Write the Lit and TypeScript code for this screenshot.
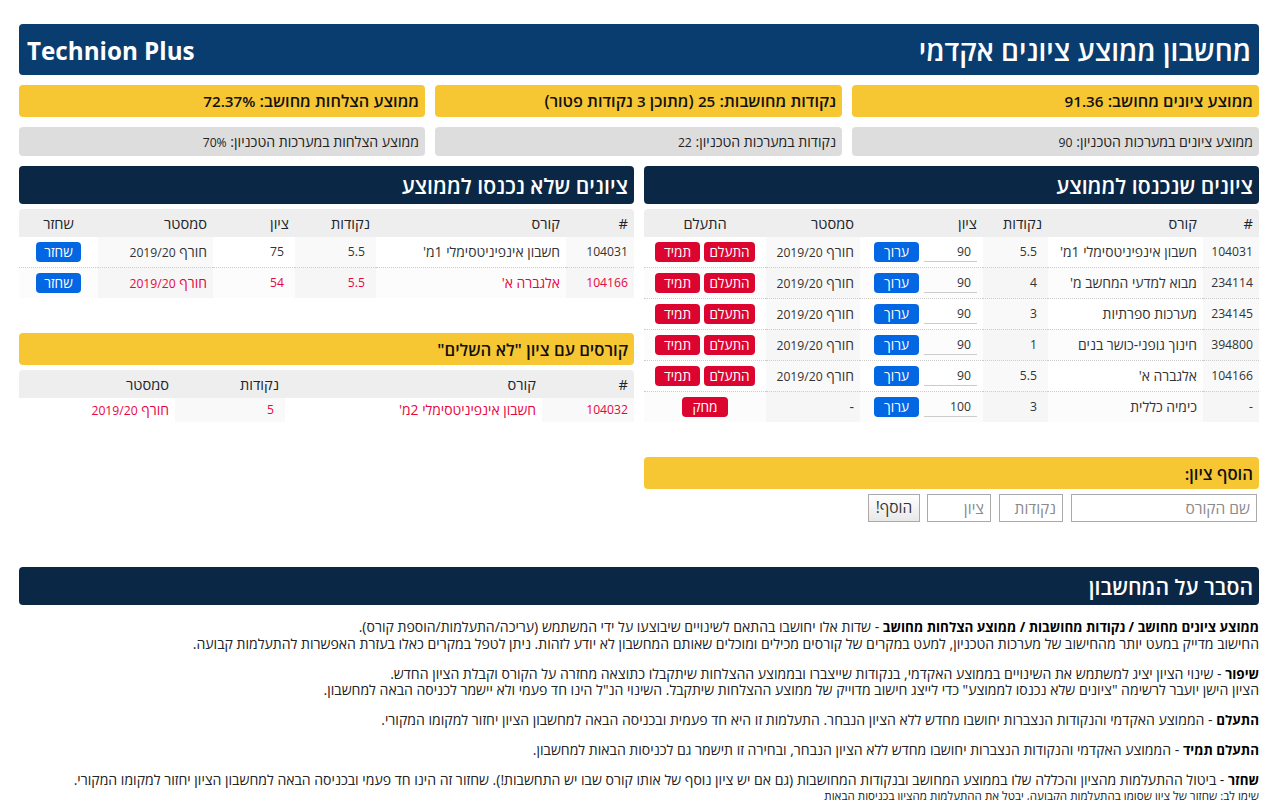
import { LitElement, html, css } from "lit";
import { customElement } from "lit/decorators.js";

type G = [string, string, string, string];
const main: G[] = [
  ["104031", "חשבון אינפיניטסימלי 1מ'", "5.5", "90"],
  ["234114", "מבוא למדעי המחשב מ'", "4", "90"],
  ["234145", "מערכות ספרתיות", "3", "90"],
  ["394800", "חינוך גופני-כושר בנים", "1", "90"],
  ["104166", "אלגברה א'", "5.5", "90"],
];
const SEM = html`חורף <span class="n">2019/20</span>`;

@customElement("app-root")
export class AppRoot extends LitElement {
  static styles = css`
    :host { display: block; height: 800px; overflow: hidden; font-family: "Open Sans", "Noto Sans", sans-serif; color: #212529; background: #fff; }
    * { box-sizing: border-box; }
    .page { padding: 24px 21px 0 19px; direction: rtl; font-size: 14px; }
    .n { font-size: 12.2px; }
    .title { height: 51px; background: #093d6f; color: #fff; border-radius: 4px; display: flex; justify-content: space-between; align-items: center; padding: 1px 8px 0; font-size: 28px; font-weight: 600; }
    .title .en { direction: ltr; font-size: 24.2px; font-weight: 700; }
    .stats { display: grid; grid-template-columns: 407px 407px 406px; column-gap: 10px; margin-top: 10px; row-gap: 10px; }
    .gold { background: #f7c733; color: #111; border-radius: 4px; font-weight: 600; }
    .stat { height: 32px; display: flex; align-items: center; padding: 0 6px; font-size: 16.3px; white-space: pre; }
    .stat .n { font-size: 15.2px; }
    .gray { height: 29px; background: #ddd; border-radius: 4px; display: flex; align-items: center; padding: 0 6px; font-size: 14.1px; color: #222; white-space: pre; }
    .gray .n { font-size: 12.2px; }
    .cols { display: grid; grid-template-columns: 615px 615px; column-gap: 10px; margin-top: 10px; }
    .navy { background: #0a2845; color: #fff; border-radius: 4px; height: 38px; display: flex; align-items: center; padding: 0 6px; font-size: 21.2px; font-weight: 600; }
    .goldhead { height: 32px; display: flex; align-items: center; padding: 0 6px; font-size: 16.7px; margin-top: 35px; }
    table { width: 100%; border-collapse: collapse; table-layout: fixed; margin-top: 5px; font-size: 13.9px; }
    th { background: #eee; font-weight: 400; height: 28px; text-align: right; padding: 0 6px; font-size: 14.6px; color: #212529; line-height: 1; }
    thead th:first-child { border-top-right-radius: 4px; }
    thead th:last-child { border-top-left-radius: 4px; }
    td { height: 31px; padding: 1px 6px 0; text-align: right; border-top: 1px dotted #ccc; color: #333; line-height: 1; }
    tbody tr:first-child td { border-top: 0; height: 30px; padding-top: 0; }
    .short tbody tr:first-child td { height: 24px; }
    td:nth-child(odd) { background: #f9f9f9; }
    td:nth-child(even) { background: #fff; }
    tr:nth-child(even) td:nth-child(odd) { background: #f6f6f6; }
    tr:nth-child(even) td:nth-child(even) { background: #fcfcfc; }
    .a.c0 { width: 56px; } .a.c1 { width: 155px; } .a.c2 { width: 65px; } .a.c3 { width: 123px; } .a.c4 { width: 94px; }
    .b.c0 { width: 68px; } .b.c1 { width: 190px; } .b.c2 { width: 81px; } .b.c3 { width: 82px; } .b.c4 { width: 115px; }
    .d.c0 { width: 92px; } .d.c1 { width: 257px; } .d.c2 { width: 110px; }
    .red td { color: #e8063f; }
    td.num { font-size: 12.2px; }
    td.pad { padding-right: 11px; font-size: 12.2px; }
    td.act, th.act { text-align: center; }
    .grade-cell { display: flex; align-items: center; column-gap: 5px; }
    input.grade { width: 53px; height: 20px; border: 0; border-bottom: 1px solid #ccc; background: transparent; text-align: right; padding: 0 6px 0 0; font: inherit; font-size: 12.2px; color: #333; outline: none; direction: rtl; }
    .btn { border: 0; border-radius: 4px; height: 20px; font: inherit; font-size: 13.6px; line-height: 18px; color: #fff; padding: 0; display: inline-block; vertical-align: middle; }
    .blue { background: #0366e2; width: 45px; }
    .crimson { background: #dc0530; }
    .w1 { width: 51px; } .w2 { width: 45px; margin-right: 4px; } .w3 { width: 46px; }
    .addform { display: flex; align-items: center; margin-top: 5px; height: 28px; }
    .addform input { height: 28px; border: 1px solid #aaa; font: inherit; font-size: 15.5px; padding: 0 6px; background: #fff; border-radius: 0; }
    .addform input::placeholder { color: #8a8a8a; }
    .i1 { width: 186px; margin-right: 2px; } .i2 { width: 64px; margin-right: 8px; } .i3 { width: 64px; margin-right: 8px; }
    .addbtn { width: 52px; height: 28px; margin-right: 7px; font: inherit; font-size: 15.5px; line-height: 1; border: 1px solid #aaa; background: linear-gradient(#fff, #e8e8e8); color: #333; padding: 0; }
    .exphead { margin-top: 45px; }
    .exp { margin-top: 14px; font-size: 14.05px; line-height: 16.5px; color: #222; }
    .exp p { margin: 0 0 13.5px; white-space: nowrap; }
    .exp b { color: #000; font-size: 13.4px; }
    .small { font-size: 11.6px; line-height: 14px; display: block; }
  `;

  private row(g: G) {
    return html`<tr>
      <td class="num">${g[0]}</td><td>${g[1]}</td><td class="pad">${g[2]}</td>
      <td><div class="grade-cell"><input class="grade" .value=${g[3]} /><button class="btn blue">ערוך</button></div></td>
      <td>${SEM}</td>
      <td class="act"><button class="btn crimson w1">התעלם</button><button class="btn crimson w2">תמיד</button></td>
    </tr>`;
  }

  private cols(cls: string, n: number) {
    return html`<colgroup>${Array.from({ length: n }, (_, i) => html`<col class="${cls} c${i}" />`)}<col /></colgroup>`;
  }

  render() {
    return html`<div class="page">
      <div class="title"><span>מחשבון ממוצע ציונים אקדמי</span><span class="en">Technion Plus</span></div>
      <div class="stats">
        <div class="gold stat"><span>ממוצע ציונים מחושב: <span class="n">91.36</span></span></div>
        <div class="gold stat"><span>נקודות מחושבות: <span class="n">25</span> (מתוכן <span class="n">3</span> נקודות פטור)</span></div>
        <div class="gold stat"><span>ממוצע הצלחות מחושב: <span class="n">72.37%</span></span></div>
        <div class="gray"><span>ממוצע ציונים במערכות הטכניון: <span class="n">90</span></span></div>
        <div class="gray"><span>נקודות במערכות הטכניון: <span class="n">22</span></span></div>
        <div class="gray"><span>ממוצע הצלחות במערכות הטכניון: <span class="n">70%</span></span></div>
      </div>
      <div class="cols">
        <div>
          <div class="navy">ציונים שנכנסו לממוצע</div>
          <table>
            ${this.cols("a", 5)}
            <thead><tr><th>#</th><th>קורס</th><th>נקודות</th><th>ציון</th><th>סמסטר</th><th class="act">התעלם</th></tr></thead>
            <tbody>
              ${main.map((g) => this.row(g))}
              <tr>
                <td class="num">-</td><td>כימיה כללית</td><td class="pad">3</td>
                <td><div class="grade-cell"><input class="grade" .value=${"100"} /><button class="btn blue">ערוך</button></div></td>
                <td>-</td>
                <td class="act"><button class="btn crimson w3">מחק</button></td>
              </tr>
            </tbody>
          </table>
          <div class="gold goldhead">הוסף ציון:</div>
          <div class="addform">
            <input class="i1" placeholder="שם הקורס" />
            <input class="i2" placeholder="נקודות" />
            <input class="i3" placeholder="ציון" />
            <button class="addbtn">הוסף!</button>
          </div>
        </div>
        <div>
          <div class="navy">ציונים שלא נכנסו לממוצע</div>
          <table>
            ${this.cols("b", 5)}
            <thead><tr><th>#</th><th>קורס</th><th>נקודות</th><th>ציון</th><th>סמסטר</th><th class="act">שחזר</th></tr></thead>
            <tbody>
              <tr><td class="num">104031</td><td>חשבון אינפיניטסימלי 1מ'</td><td class="pad">5.5</td><td class="pad">75</td><td>${SEM}</td><td class="act"><button class="btn blue">שחזר</button></td></tr>
              <tr class="red"><td class="num">104166</td><td>אלגברה א'</td><td class="pad">5.5</td><td class="pad">54</td><td>${SEM}</td><td class="act"><button class="btn blue">שחזר</button></td></tr>
            </tbody>
          </table>
          <div class="gold goldhead">קורסים עם ציון "לא השלים"</div>
          <table class="short">
            ${this.cols("d", 3)}
            <thead><tr><th>#</th><th>קורס</th><th>נקודות</th><th>סמסטר</th></tr></thead>
            <tbody><tr class="red"><td class="num">104032</td><td>חשבון אינפיניטסימלי 2מ'</td><td class="pad">5</td><td>${SEM}</td></tr></tbody>
          </table>
        </div>
      </div>
      <div class="navy exphead">הסבר על המחשבון</div>
      <div class="exp">
        <p><b>ממוצע ציונים מחושב / נקודות מחושבות / ממוצע הצלחות מחושב</b> - שדות אלו יחושבו בהתאם לשינויים שיבוצעו על ידי המשתמש (עריכה/התעלמות/הוספת קורס).<br />החישוב מדייק במעט יותר מהחישוב של מערכות הטכניון, למעט במקרים של קורסים מכילים ומוכלים שאותם המחשבון לא יודע לזהות. ניתן לטפל במקרים כאלו בעזרת האפשרות להתעלמות קבועה.</p>
        <p><b>שיפור</b> - שינוי הציון יציג למשתמש את השינויים בממוצע האקדמי, בנקודות שייצברו ובממוצע ההצלחות שיתקבלו כתוצאה מחזרה על הקורס וקבלת הציון החדש.<br />הציון הישן יועבר לרשימה "ציונים שלא נכנסו לממוצע" כדי לייצג חישוב מדוייק של ממוצע ההצלחות שיתקבל. השינוי הנ"ל הינו חד פעמי ולא יישמר לכניסה הבאה למחשבון.</p>
        <p><b>התעלם</b> - הממוצע האקדמי והנקודות הנצברות יחושבו מחדש ללא הציון הנבחר. התעלמות זו היא חד פעמית ובכניסה הבאה למחשבון הציון יחזור למקומו המקורי.</p>
        <p><b>התעלם תמיד</b> - הממוצע האקדמי והנקודות הנצברות יחושבו מחדש ללא הציון הנבחר, ובחירה זו תישמר גם לכניסות הבאות למחשבון.</p>
        <p><b>שחזר</b> - ביטול ההתעלמות מהציון והכללה שלו בממוצע המחושב ובנקודות המחושבות (גם אם יש ציון נוסף של אותו קורס שבו יש התחשבות!). שחזור זה הינו חד פעמי ובכניסה הבאה למחשבון הציון יחזור למקומו המקורי.<br /><span class="small">שימו לב: שחזור של ציון שסומן בהתעלמות הקבועה, יבטל את ההתעלמות מהציון בכניסות הבאות</span></p>
      </div>
    </div>`;
  }
}
